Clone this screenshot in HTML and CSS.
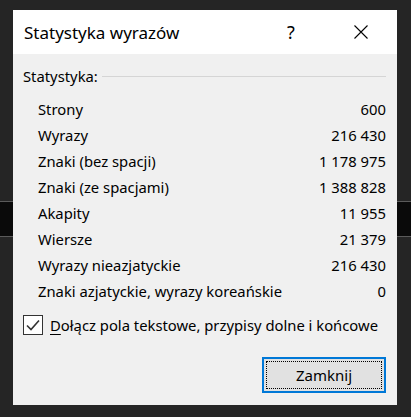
FILE: index.html
```html
<!DOCTYPE html>
<html lang="pl">
<head>
<meta charset="utf-8">
<title>Statystyka wyrazów</title>
<link rel="stylesheet" href="styles.css">
</head>
<body>
<div class="dialog">
  <div class="titlebar">
    <span class="title">Statystyka wyrazów</span>
    <span class="help">?</span>
    <span class="close">
      <svg width="14" height="14" viewBox="0 0 14 14"><path d="M0.5 0.5 L13.5 13.5 M13.5 0.5 L0.5 13.5" stroke="#000" stroke-width="1.1" fill="none"/></svg>
    </span>
  </div>
  <div class="content">
    <div class="group-header"><span>Statystyka:</span><span class="rule"></span></div>
    <div class="stats">
      <div class="row"><span>Strony</span><span>600</span></div>
      <div class="row"><span>Wyrazy</span><span>216 430</span></div>
      <div class="row"><span>Znaki (bez spacji)</span><span>1 178 975</span></div>
      <div class="row"><span>Znaki (ze spacjami)</span><span>1 388 828</span></div>
      <div class="row"><span>Akapity</span><span>11 955</span></div>
      <div class="row"><span>Wiersze</span><span>21 379</span></div>
      <div class="row"><span>Wyrazy nieazjatyckie</span><span>216 430</span></div>
      <div class="row"><span>Znaki azjatyckie, wyrazy koreańskie</span><span>0</span></div>
    </div>
    <label class="check">
      <span class="box">
        <svg width="14" height="12" viewBox="0 0 14 12"><path d="M1 6.5 L5 10.5 L13 1.5" stroke="#333" stroke-width="1.6" fill="none"/></svg>
      </span>
      <span class="check-label"><u>D</u>ołącz pola tekstowe, przypisy dolne i końcowe</span>
    </label>
    <div class="actions">
      <button class="btn"><span class="focus">Zamknij</span></button>
    </div>
  </div>
</div>
</body>
</html>
```
FILE: styles.css
```css
html, body {
  margin: 0;
  padding: 0;
}
body {
  width: 411px;
  height: 417px;
  overflow: hidden;
  background: linear-gradient(to bottom,
    #252525 0 201px,
    #5a5a5a 201px 202px,
    #0a0a0a 202px 236px,
    #5a5a5a 236px 237px,
    #252525 237px);
  font-family: "Noto Sans", "Open Sans", sans-serif;
  color: #000;
}
.dialog {
  margin: 10px 0 0 13px;
  width: 384px;
  height: 395px;
  background: #f0f0f0;
  display: flex;
  flex-direction: column;
}
.titlebar {
  height: 44px;
  background: #fff;
  display: flex;
  align-items: center;
  padding-left: 11px;
  font-size: 17px;
}
.title {
  flex: 1;
}
.help {
  width: 20px;
  text-align: center;
  margin-right: 53px;
  font-size: 18px;
}
.close {
  display: flex;
  margin-right: 29px;
}
.content {
  flex: 1;
  display: flex;
  flex-direction: column;
  font-size: 14.8px;
}
.group-header {
  margin-top: 12px;
  height: 20px;
  display: flex;
  align-items: center;
  padding: 0 11px 0 10px;
  gap: 4px;
}
.rule {
  flex: 1;
  height: 1px;
  background: #d5d5d5;
}
.stats {
  margin-top: 10px;
  padding: 0 11px 0 25px;
}
.row {
  height: 26px;
  display: flex;
  align-items: center;
  justify-content: space-between;
}
.check {
  margin-top: 8px;
  height: 26px;
  display: flex;
  align-items: center;
  padding-left: 10px;
  gap: 7px;
}
.box {
  width: 18px;
  height: 18px;
  border: 1px solid #333;
  background: #fff;
  display: flex;
  align-items: center;
  justify-content: center;
}
.check-label u {
  text-decoration-thickness: 1px;
  text-underline-offset: 3px;
}
.actions {
  margin-top: 19px;
  display: flex;
  justify-content: flex-end;
  padding-right: 11px;
}
.btn {
  width: 124px;
  height: 36px;
  border: 2px solid #0078d7;
  background: #e1e1e1;
  padding: 2px;
  font: inherit;
  font-size: 15px;
  color: #000;
  display: flex;
}
.focus {
  flex: 1;
  border: 1px dotted #000;
  display: flex;
  align-items: center;
  justify-content: center;
}
```
